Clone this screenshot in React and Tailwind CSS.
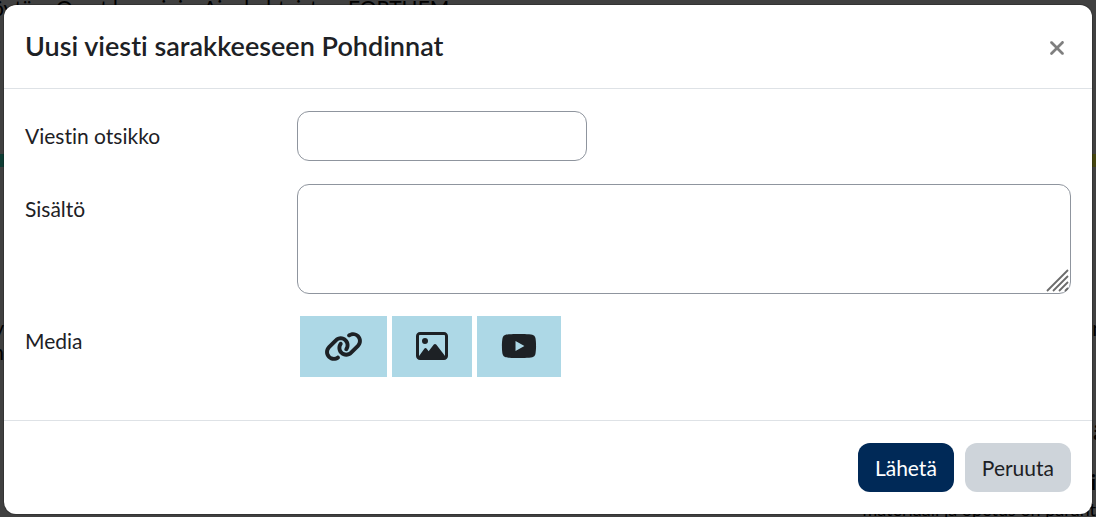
import { FaLink, FaRegImage, FaXmark, FaYoutube } from 'react-icons/fa6';

const navLinks = [
  { label: 'öytä', className: 'w-14 -ml-2' },
  { label: 'Omat kurssini', className: 'w-[147px] pl-2' },
  { label: 'Ajankohtaista', className: 'w-[145px] pl-2' },
  { label: 'FORTHEM', className: 'pl-2' },
];

const mediaButtons = [
  { label: 'Linkki', icon: FaLink, size: 39 },
  { label: 'Kuva', icon: FaRegImage, size: 32 },
  { label: 'YouTube', icon: FaYoutube, size: 36 },
];

const PageBehind = () => (
  <div aria-hidden="true" className="absolute inset-0 overflow-hidden leading-6 text-black">
    <div className="absolute left-0 -top-1 flex whitespace-nowrap">
      {navLinks.map((link) => (
        <span key={link.label} className={link.className}>
          {link.label}
        </span>
      ))}
    </div>
    <div className="absolute left-0 top-[154px] h-[13px] w-1 bg-[#0f3d34]"></div>
    <div className="absolute right-0 top-[154px] h-[13px] w-1 bg-[#45450f]"></div>
    <div className="absolute left-0 top-[316px] flex w-1 flex-col items-end">
      <span>y</span>
      <span>n</span>
    </div>
    <span className="absolute -right-2 top-[316px]">n</span>
    <span className="absolute -right-2 top-[420px] font-bold">ä</span>
    <span className="absolute right-0 top-[470px] font-bold">i</span>
    <p className="absolute right-0 top-[497px] whitespace-nowrap text-lg leading-6">
      materiaali ja opetus on parant
    </p>
  </div>
);

const ResizeGrip = () => (
  <svg
    aria-hidden="true"
    viewBox="0 0 24 24"
    className="pointer-events-none absolute bottom-px right-px size-6"
    stroke="#6b6b6b"
    strokeWidth="1.8"
  >
    <path d="M1 22 22 1M7 22 22 7M13 22l9-9M19 22l3-3" />
  </svg>
);

const MessageDialog = () => (
  <form
    role="dialog"
    aria-labelledby="dialog-title"
    className="relative rounded-xl bg-white ring-1 ring-black/20"
    onSubmit={(e) => e.preventDefault()}
  >
    {/* Header */}
    <div className="flex items-center justify-between border-b border-[#dee2e6] px-[21px] pb-[22px] pt-5">
      <h1 id="dialog-title" className="text-[27px] font-semibold leading-[41px]">
        Uusi viesti sarakkeeseen Pohdinnat
      </h1>
      <button type="button" aria-label="Sulje" className="px-[3px] pt-1 text-[#7f7f7f]">
        <FaXmark size={22} />
      </button>
    </div>

    {/* Fields */}
    <div className="flex flex-col pb-[43px] pt-[22px]">
      <div className="mb-[23px] flex">
        <label htmlFor="title" className="w-1/4 shrink-0 pl-[21px] pt-[11px] leading-7">
          Viestin otsikko
        </label>
        <div className="flex-1 pl-[21px]">
          <input
            id="title"
            type="text"
            className="block h-[50px] w-[290px] rounded-xl border border-[#8f959e] bg-white px-4"
          />
        </div>
      </div>
      <div className="mb-[22px] flex">
        <label htmlFor="content" className="w-1/4 shrink-0 pl-[21px] pt-[11px] leading-7">
          Sisältö
        </label>
        <div className="flex-1 px-[21px]">
          <div className="relative">
            <textarea
              id="content"
              className="block h-[110px] w-full resize-none rounded-xl border border-[#8f959e] bg-white px-4 py-2"
            />
            <ResizeGrip />
          </div>
        </div>
      </div>
      <div className="flex">
        <span id="media-label" className="w-1/4 shrink-0 pl-[21px] pt-[11px] leading-7">
          Media
        </span>
        <div role="group" aria-labelledby="media-label" className="flex gap-[5px] pl-6">
          {mediaButtons.map((item) => (
            <button
              key={item.label}
              type="button"
              aria-label={item.label}
              className="flex h-[61px] items-center bg-[#add8e6] px-6 pb-px"
            >
              <item.icon size={item.size} />
            </button>
          ))}
        </div>
      </div>
    </div>

    {/* Footer */}
    <div className="flex justify-end gap-[11px] border-t border-[#dee2e6] px-[21px] py-[22px]">
      <button type="submit" className="rounded-xl bg-[#002957] px-[17px] py-[10px] leading-[29px] text-white">
        Lähetä
      </button>
      <button type="button" className="rounded-xl bg-[#ced4da] px-[17px] py-[10px] leading-[29px]">
        Peruuta
      </button>
    </div>
  </form>
);

const App = () => (
  <div className="relative min-h-screen overflow-hidden bg-[#404040] px-1 pt-[5px] font-['Lato',sans-serif] text-[21px] text-[#1d2125] [font-variant-ligatures:none]">
    <PageBehind />
    <MessageDialog />
  </div>
);

export default App;
